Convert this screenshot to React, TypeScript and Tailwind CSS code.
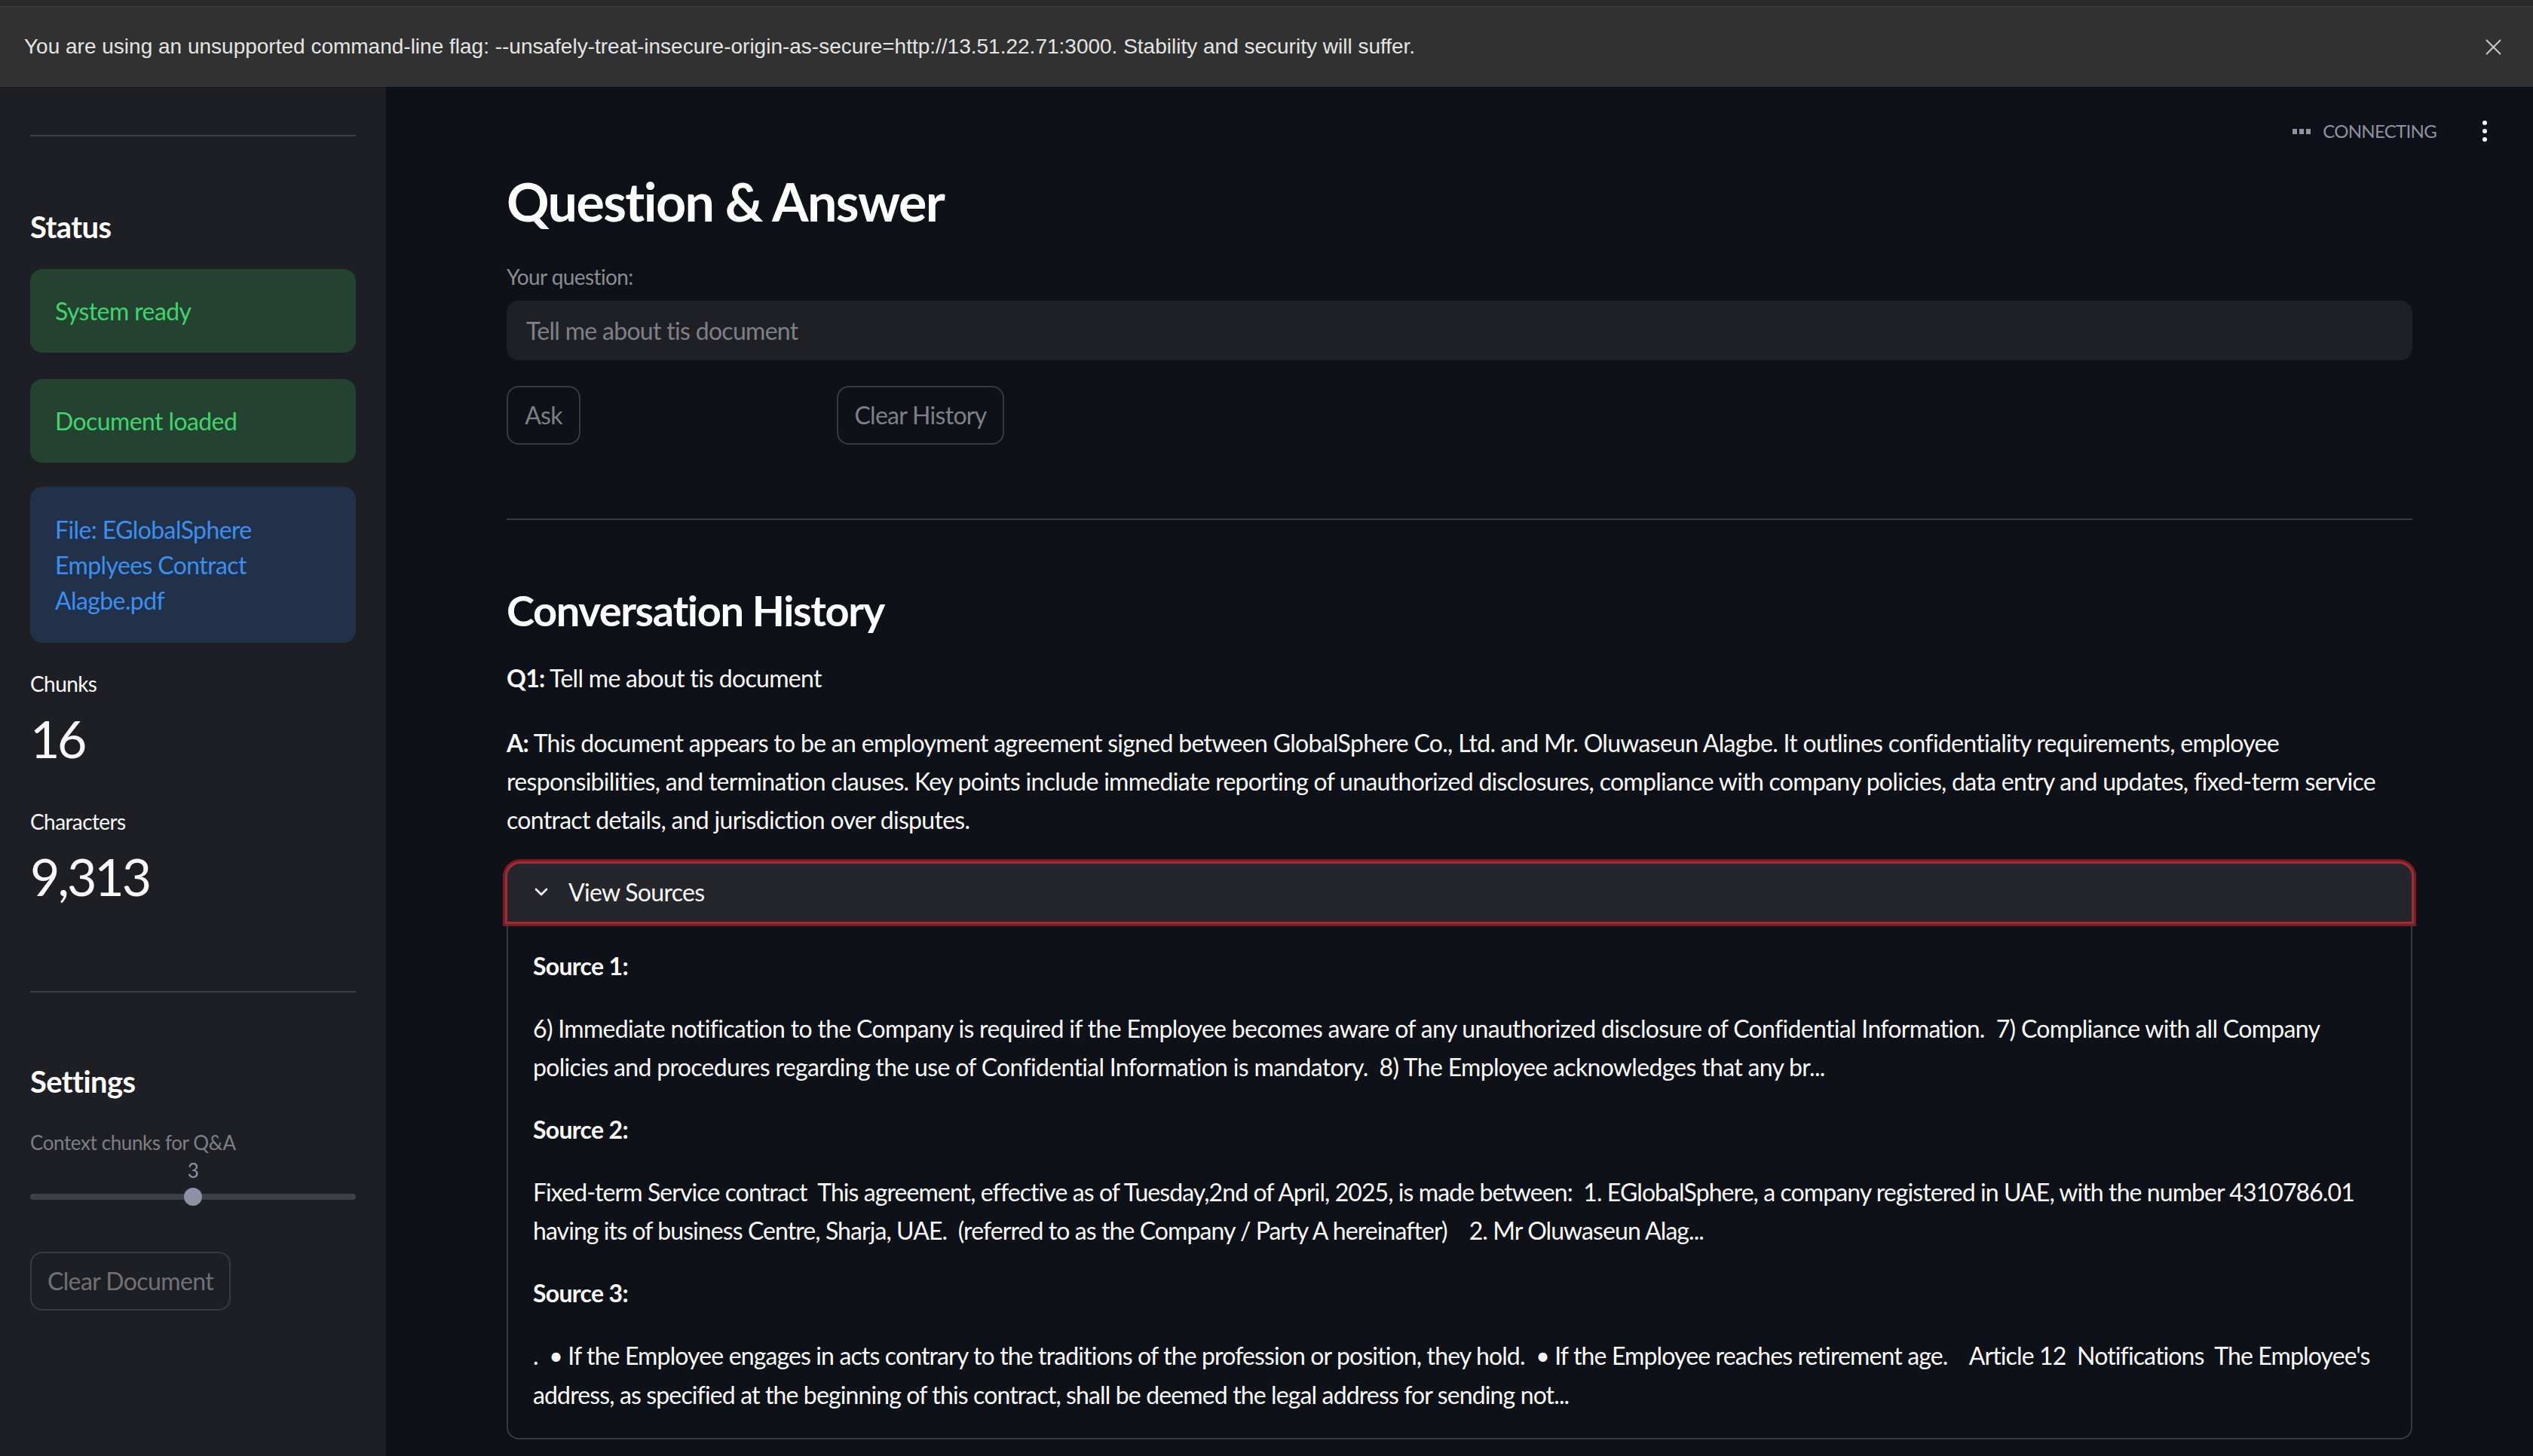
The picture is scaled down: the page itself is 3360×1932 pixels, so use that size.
const answerLines = [
  'This document appears to be an employment agreement signed between GlobalSphere Co., Ltd. and Mr. Oluwaseun Alagbe. It outlines confidentiality requirements, employee',
  'responsibilities, and termination clauses. Key points include immediate reporting of unauthorized disclosures, compliance with company policies, data entry and updates, fixed-term service',
  'contract details, and jurisdiction over disputes.',
];

// each source: tracking class (tuned so lines fill like the original), then its two lines
const sources = [
  {
    track: 'tracking-[-0.68px]',
    lines: [
      '6) Immediate notification to the Company is required if the Employee becomes aware of any unauthorized disclosure of Confidential Information.  7) Compliance with all Company',
      'policies and procedures regarding the use of Confidential Information is mandatory.  8) The Employee acknowledges that any br...',
    ],
  },
  {
    track: 'tracking-[-0.92px]',
    lines: [
      'Fixed-term Service contract  This agreement, effective as of Tuesday,2nd of April, 2025, is made between:  1. EGlobalSphere, a company registered in UAE, with the number 4310786.01',
      'having its of business Centre, Sharja, UAE.  (referred to as the Company / Party A hereinafter)    2. Mr Oluwaseun Alag...',
    ],
  },
  {
    track: 'tracking-[-0.87px]',
    lines: [
      '.  • If the Employee engages in acts contrary to the traditions of the profession or position, they hold.  • If the Employee reaches retirement age.    Article 12  Notifications  The Employee\'s',
      'address, as specified at the beginning of this contract, shall be deemed the legal address for sending not...',
    ],
  },
];

function Banner() {
  return (
    <div className="shrink-0">
      <div className="h-[8px] bg-[#2a2a2a]" />
      <div className="h-[2px] bg-[#3a3a3a]" />
      <div className="flex h-[105px] items-center justify-between border-b border-[#3a3a3a] bg-[#313131] pl-[32px] pr-[42px] font-['Liberation_Sans',sans-serif] text-[28px] text-[#e4e4e4]">
        <span>
          You are using an unsupported command-line flag: --unsafely-treat-insecure-origin-as-secure=http://13.51.22.71:3000. Stability and security will suffer.
        </span>
        <svg width="21" height="21" viewBox="0 0 21 21" fill="none" stroke="#c9c9c9" strokeWidth="2">
          <path d="M1 1 L20 20 M20 1 L1 20" />
        </svg>
      </div>
    </div>
  );
}

function Alert({ tone, children }: { tone: 'success' | 'info'; children: React.ReactNode }) {
  const cls =
    tone === 'success'
      ? 'bg-[#234230] text-[#3fd46e]'
      : 'bg-[#21314a] text-[#3b8fef]';
  return <div className={`rounded-[16px] px-[33px] py-[30px] text-[32px] leading-[51px] ${cls}`}>{children}</div>;
}

function Sidebar() {
  return (
    <aside className="flex w-[512px] shrink-0 flex-col bg-[#1e1f24] px-[40px] pt-[64px] tracking-[-0.6px]">
      <div className="h-[2px] bg-[#3c3d44]" />
      <h3 className="mt-[96px] text-[40px] font-bold leading-[48px] text-white">Status</h3>
      <div className="mt-[32px]">
        <Alert tone="success">System ready</Alert>
      </div>
      <div className="mt-[35px]">
        <Alert tone="success">Document loaded</Alert>
      </div>
      <div className="mt-[32px] rounded-[16px] bg-[#21314a] px-[33px] py-[33px] text-[32px] leading-[47px] text-[#3b8fef]">
        File: EGlobalSphere
        <br />
        Emplyees Contract
        <br />
        Alagbe.pdf
      </div>

      <div className="mt-[34px] text-[28px] leading-[40px] text-[#fafafa]">Chunks</div>
      <div className="mt-[10px] text-[68px] leading-[86px] tracking-[-3.5px] text-[#fafafa]">16</div>
      <div className="mt-[47px] text-[28px] leading-[40px] text-[#fafafa]">Characters</div>
      <div className="mt-[10px] text-[68px] leading-[86px] tracking-[-3px] text-[#fafafa]">9,313</div>

      <div className="mt-[109px] h-[2px] bg-[#3c3d44]" />
      <h3 className="mt-[94px] text-[40px] font-bold leading-[48px] text-white">Settings</h3>
      <div className="mt-[37px] text-[26px] leading-[40px] tracking-[-0.4px] text-[#7e7f84]">Context chunks for Q&amp;A</div>
      <div className="mt-[2px] text-center text-[26px] leading-[30px] text-[#8c91a4]">3</div>
      <div className="relative mt-[8px] flex h-[24px] items-center">
        <div className="h-[8px] w-full rounded-full bg-[#3e4049]" />
        <div className="absolute left-[204px] top-0 h-[24px] w-[24px] rounded-full bg-[#8c91a5]" />
      </div>
      <button className="mt-[61px] flex h-[78px] w-[266px] items-center justify-center rounded-[16px] border-2 border-[#3a3b41] text-[32px] text-[#707176]">
        Clear Document
      </button>
    </aside>
  );
}

function Toolbar() {
  return (
    <div className="absolute right-[61px] top-[40px] flex h-[38px] items-center">
      <div className="flex gap-[3px]">
        <span className="h-[7px] w-[6px] bg-[#8e92a3]" />
        <span className="h-[7px] w-[6px] bg-[#8e92a3]" />
        <span className="h-[7px] w-[6px] bg-[#8e92a3]" />
      </div>
      <span className="ml-[16px] text-[24px] text-[#8e92a3]">CONNECTING</span>
      <svg className="ml-[61px]" width="6" height="28" viewBox="0 0 6 28" fill="#ffffff">
        <circle cx="3" cy="3" r="3" />
        <circle cx="3" cy="14" r="3" />
        <circle cx="3" cy="25" r="3" />
      </svg>
    </div>
  );
}

function Main() {
  return (
    <main className="relative min-w-0 flex-1 px-[160px] pt-[110px] text-[32px] tracking-[-0.7px]">
      <Toolbar />
      <h2 className="text-[70px] font-bold leading-[84px] tracking-[-1.6px] text-white">Question &amp; Answer</h2>
      <div className="mt-[38px] text-[28px] leading-[40px] tracking-[-0.6px] text-[#8b8c91]">Your question:</div>
      <div className="mt-[12px] flex h-[79px] items-center rounded-[16px] bg-[#1f2026] px-[26px] text-[#7f8085]">
        Tell me about tis document
      </div>
      <div className="mt-[34px] flex">
        <div className="w-[438px]">
          <button className="flex h-[78px] w-[98px] items-center justify-center rounded-[16px] border-2 border-[#393a40] text-[#7f8085]">
            Ask
          </button>
        </div>
        <button className="flex h-[78px] w-[222px] items-center justify-center rounded-[16px] border-2 border-[#393a40] text-[#7f8085]">
          Clear History
        </button>
      </div>

      <div className="mt-[98px] h-[2px] bg-[#393b41]" />
      <h3 className="mt-[86px] text-[56px] font-bold leading-[68px] tracking-[-1.4px] text-white">Conversation History</h3>
      <p className="mt-[30px] leading-[51px]">
        <b>Q1:</b> Tell me about tis document
      </p>
      <p className="mt-[35px] whitespace-pre leading-[51.2px]">
        <b>A:</b> {answerLines[0]}
        <br />
        {answerLines[1]}
        <br />
        {answerLines[2]}
      </p>

      <div className="mt-[29px]">
        <div className="-mx-[2px] flex h-[83px] items-center rounded-t-[20px] border-[3px] border-[#9d2d36] bg-[#25262c] pl-[35px] ring-[3px] ring-[#7a1b23]">
          <svg width="20" height="12" viewBox="0 0 20 12" fill="none" stroke="#ffffff" strokeWidth="2.6" strokeLinecap="round" strokeLinejoin="round">
            <path d="M3 2 L10 9 L17 2" />
          </svg>
          <span className="ml-[26px]">View Sources</span>
        </div>
        <div className="flex flex-col gap-[32px] rounded-b-[16px] border-x-2 border-b-2 border-[#393a40] px-[33px] pb-[32px] pt-[30px]">
          {sources.map((src, i) => (
            <div key={i} className="flex flex-col gap-[32px]">
              <p className="font-bold leading-[51px]">Source {i + 1}:</p>
              <p className={`whitespace-pre leading-[51.2px] ${src.track}`}>
                {src.lines[0]}
                <br />
                {src.lines[1]}
              </p>
            </div>
          ))}
        </div>
      </div>
    </main>
  );
}

export default function App() {
  return (
    <div className="flex h-[1932px] w-[3360px] flex-col overflow-hidden bg-[#0e1117] font-['Lato',sans-serif] text-[#fafafa]">
      <Banner />
      <div className="flex min-h-0 flex-1">
        <Sidebar />
        <Main />
      </div>
    </div>
  );
}
